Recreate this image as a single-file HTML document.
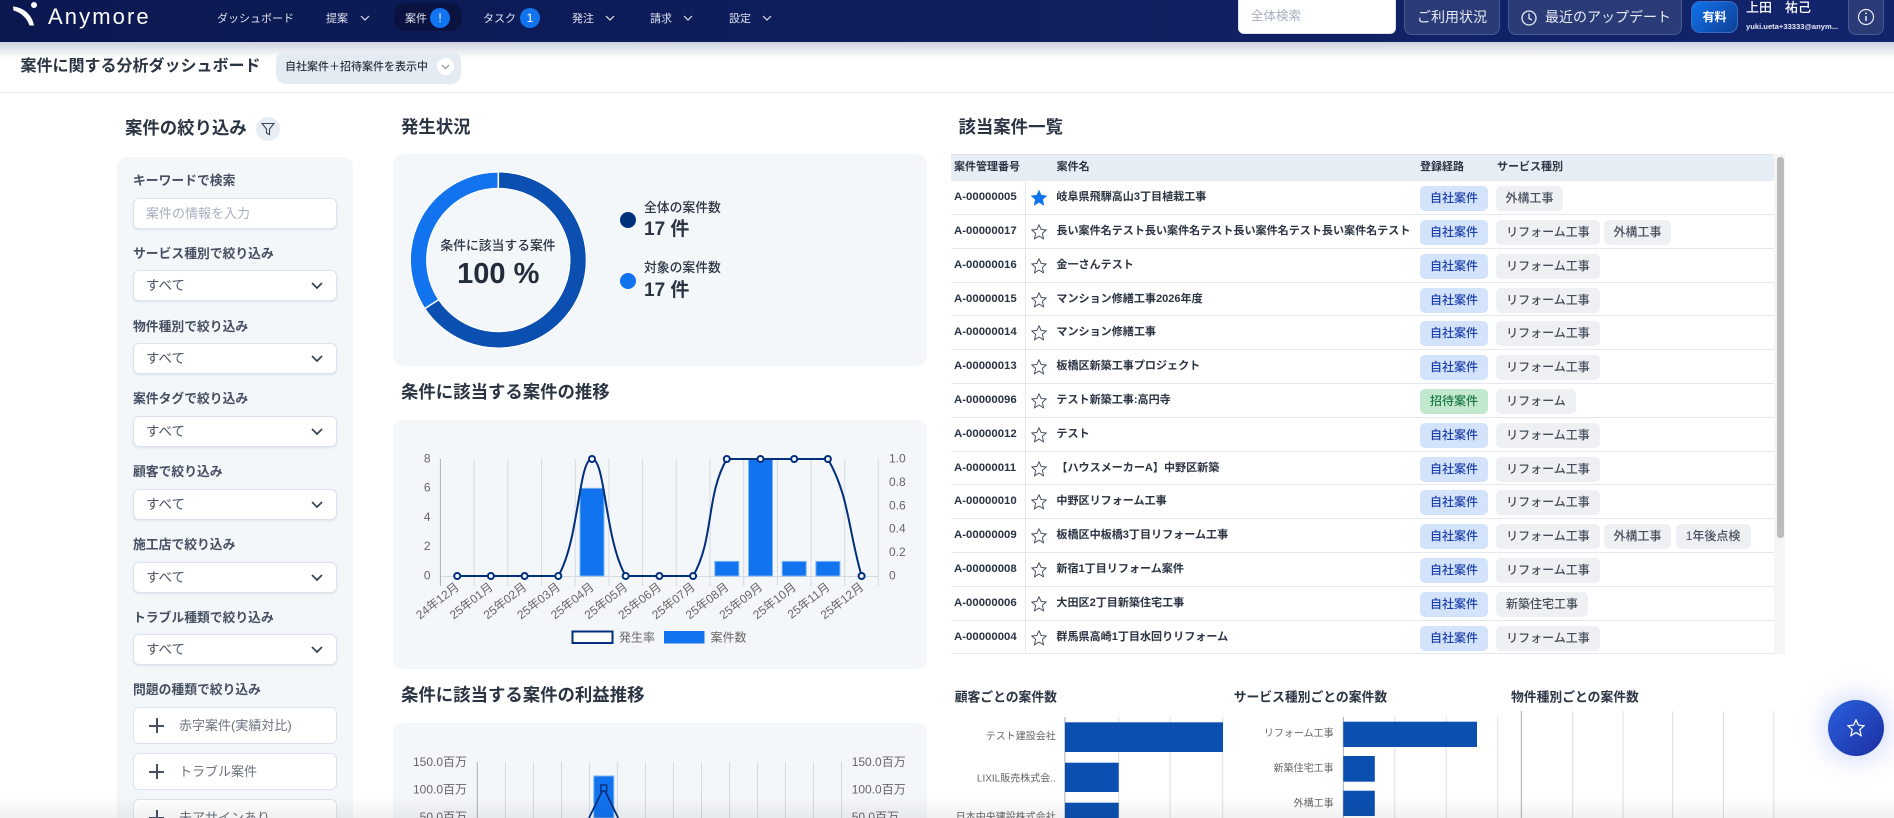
<!DOCTYPE html>
<html lang="ja"><head><meta charset="utf-8"><title>案件に関する分析ダッシュボード</title>
<style>
*{box-sizing:border-box}
html,body{margin:0;padding:0;width:1894px;height:818px;overflow:hidden;background:#fff;font-family:"Liberation Sans","Noto Sans CJK JP",sans-serif;color:#2b3443}
#root{position:absolute;left:0;top:0;width:1894px;height:818px;overflow:hidden;background:#fff}
.a{position:absolute;white-space:nowrap}
.t{position:absolute;white-space:nowrap;line-height:20px;height:20px}
#hd{position:absolute;left:0;top:0;width:1894px;height:42px;background:linear-gradient(90deg,#0b1850,#12246c)}
#sh{position:absolute;left:0;top:42px;width:1894px;height:16px;background:linear-gradient(#cdd2df,#fff)}
.nav{font-size:11px;color:#dfe3f0}
.hbtn{position:absolute;top:0;height:35px;background:#2b3b78;border:1px solid #4a5a92;border-top:0;border-radius:0 0 8px 8px;color:#e8ebf5;font-size:14px;line-height:34px;text-align:center}
.badge{position:absolute;top:8px;width:20px;height:20px;border-radius:50%;background:#1173ee;color:#fff;font-size:12px;line-height:20px;text-align:center}
.h2{font-size:17.4px;font-weight:700;color:#2b3443}
.lb{font-size:12.8px;font-weight:700;color:#465062}
.sel{position:absolute;left:133px;width:204px;height:31px;background:#fff;border:1px solid #dde3ee;border-radius:6px;box-shadow:0 1px 2px rgba(60,80,120,.12);font-size:13.5px;color:#4b5563;line-height:30px;padding-left:12px}
.sel svg{position:absolute;left:177px;top:11px}
.tb{position:absolute;left:133px;width:204px;height:37px;background:#fff;border:1px solid #dde3ee;border-radius:6px;font-size:13px;color:#6b7280;line-height:35px;padding-left:45px;white-space:nowrap}
.tb i{position:absolute;left:15px;top:17px;width:15px;height:2px;background:#465062}
.tb b{position:absolute;left:22px;top:10px;width:2px;height:15px;background:#465062}
.panel{position:absolute;background:#f4f7fa;border-radius:10px}
.row{position:absolute;left:951px;width:823px;border-bottom:1.5px solid #e2e8f0}
.row .id{position:absolute;left:3px;top:5.5px;font-size:11.4px;font-weight:700;line-height:20px;color:#2b3443;white-space:nowrap}
.row svg{position:absolute;left:80px;top:9px}
.row .nm{position:absolute;left:105.4px;top:5.5px;font-size:11.07px;font-weight:700;line-height:20px;color:#2b3443;white-space:nowrap}
.tag{position:absolute;top:4.5px;height:25px;border-radius:5px;font-size:12px;line-height:25px;text-align:center;white-space:nowrap}
.own{left:469px;width:68px;background:#d3e3fb;color:#1c3fa8;font-weight:500}
.inv{left:469px;width:68px;background:#c2e8ce;color:#187a40;font-weight:500}
.g{background:#eff0f3;color:#454e5c;font-weight:500}
.fab{position:absolute;left:1828px;top:700px;width:56px;height:56px;border-radius:50%;background:linear-gradient(135deg,#2a60e0,#1c2fa0);box-shadow:0 0 30px rgba(70,110,240,.35)}
#bot{position:absolute;left:0;top:796px;width:1894px;height:22px;background:linear-gradient(rgba(0,0,0,0),rgba(0,0,0,.055))}
</style></head><body><div id="root">

<div id="sh"></div>
<div id="hd"></div>

<svg class="a" style="left:0;top:0" width="170" height="42" viewBox="0 0 170 42">
<path d="M13 6.5C23 7.5 32 14 34 25.5L29.5 25.5C27 18 21 12.5 13.5 10.5Z" fill="#fff"/>
<circle cx="34" cy="5" r="3" fill="#fff"/>
</svg>
<div class="a" style="left:48px;top:4px;font-size:22px;line-height:26px;letter-spacing:2.1px;color:#fff">Anymore</div>

<div class="t nav" style="left:217px;top:8.5px">ダッシュボード</div>
<div class="t nav" style="left:326px;top:8.5px">提案</div>
<div class="a" style="left:394px;top:3px;width:68px;height:28px;background:#0a1340;border-radius:12px"></div>
<div class="t nav" style="left:405px;top:8.5px">案件</div>
<div class="badge" style="left:430px">!</div>
<div class="t nav" style="left:483px;top:8.5px">タスク</div>
<div class="badge" style="left:520px">1</div>
<div class="t nav" style="left:572px;top:8.5px">発注</div>
<div class="t nav" style="left:650px;top:8.5px">請求</div>
<div class="t nav" style="left:729px;top:8.5px">設定</div>
<svg class="a" style="left:0;top:0" width="800" height="42" fill="none" stroke="#dfe3f0" stroke-width="1.2">
<polyline points="361,16 365,20 369,16"/><polyline points="606,16 610,20 614,16"/><polyline points="684,16 688,20 692,16"/><polyline points="763,16 767,20 771,16"/>
</svg>

<div class="a" style="left:1238px;top:0;width:158px;height:34px;background:#fff;border:1px solid #dde3ee;border-top:0;border-radius:0 0 6px 6px;font-size:12.5px;color:#a7b0c0;line-height:32px;padding-left:12px">全体検索</div>
<div class="hbtn" style="left:1404px;width:96px">ご利用状況</div>
<div class="hbtn" style="left:1508px;width:174px;text-align:left;padding-left:36px">最近のアップデート</div>
<svg class="a" style="left:1520px;top:9px" width="18" height="18" fill="none" stroke="#e8ebf5" stroke-width="1.3"><circle cx="9" cy="9" r="7"/><polyline points="9,4.5 9,9.5 12,11"/></svg>
<div class="a" style="left:1691px;top:1px;width:47px;height:32px;border-radius:9px;border:1px solid #3a6bc0;background:linear-gradient(135deg,#1173ee,#0d3f94);color:#fff;font-size:12px;font-weight:700;text-align:center;line-height:30px">有料</div>
<div class="a" style="left:1746px;top:0;height:18px;overflow:hidden;line-height:16px;font-size:13px;font-weight:500;color:#fff">上田　祐己</div>
<div class="a" style="left:1746px;top:17px;line-height:20px;font-size:7.6px;font-weight:700;color:#e8ebf5">yuki.ueta+33333@anym...</div>
<div class="hbtn" style="left:1848px;width:36px"></div>
<svg class="a" style="left:1857px;top:8px" width="18" height="18" fill="none" stroke="#e8ebf5" stroke-width="1.2"><circle cx="9" cy="9" r="7.5"/><line x1="9" y1="8" x2="9" y2="13" stroke-width="1.5"/><circle cx="9" cy="5.3" r=".9" fill="#e8ebf5" stroke="none"/></svg>

<div class="t" style="left:20.5px;top:56.5px;font-size:16px;font-weight:700;color:#2b3443">案件に関する分析ダッシュボード</div>
<div class="a" style="left:276px;top:51px;width:185px;height:33px;background:#e4ebf3;border-radius:10px"></div>
<div class="t" style="left:285px;top:56.5px;font-size:11px;font-weight:500;color:#2b3443">自社案件＋招待案件を表示中</div>
<div class="a" style="left:437px;top:58px;width:17px;height:17px;background:#fff;border-radius:50%"></div>
<svg class="a" style="left:441px;top:64px" width="9" height="6" fill="none" stroke="#7b8494" stroke-width="1"><polyline points="1,1 4.5,4.5 8,1"/></svg>
<div class="a" style="left:0;top:92px;width:1894px;height:1px;background:#e8edf2"></div>

<div class="t h2" style="left:125px;top:118px">案件の絞り込み</div>
<div class="a" style="left:256px;top:117px;width:24px;height:24px;border-radius:50%;background:#e6edf5"></div>
<svg class="a" style="left:261px;top:122px" width="14" height="14" fill="none" stroke="#3a4354" stroke-width="1.1"><path d="M1 1.5H13L8.5 7V12.5L5.5 11V7Z"/></svg>
<div class="panel" style="left:117px;top:157px;width:236px;height:661px;border-radius:10px 10px 0 0"></div>
<div class="t lb" style="left:133px;top:170.5px">キーワードで検索</div>
<div class="sel" style="top:198px;font-size:13px;color:#a7b0c0">案件の情報を入力</div>
<div class="t lb" style="left:133px;top:243.5px">サービス種別で絞り込み</div>
<div class="sel" style="top:270px">すべて<svg width="12" height="8" fill="none" stroke="#3a4354" stroke-width="1.7"><polyline points="1,1 6,6 11,1"/></svg></div>
<div class="t lb" style="left:133px;top:316.5px">物件種別で絞り込み</div>
<div class="sel" style="top:343px">すべて<svg width="12" height="8" fill="none" stroke="#3a4354" stroke-width="1.7"><polyline points="1,1 6,6 11,1"/></svg></div>
<div class="t lb" style="left:133px;top:388.5px">案件タグで絞り込み</div>
<div class="sel" style="top:416px">すべて<svg width="12" height="8" fill="none" stroke="#3a4354" stroke-width="1.7"><polyline points="1,1 6,6 11,1"/></svg></div>
<div class="t lb" style="left:133px;top:461.5px">顧客で絞り込み</div>
<div class="sel" style="top:489px">すべて<svg width="12" height="8" fill="none" stroke="#3a4354" stroke-width="1.7"><polyline points="1,1 6,6 11,1"/></svg></div>
<div class="t lb" style="left:133px;top:534.5px">施工店で絞り込み</div>
<div class="sel" style="top:562px">すべて<svg width="12" height="8" fill="none" stroke="#3a4354" stroke-width="1.7"><polyline points="1,1 6,6 11,1"/></svg></div>
<div class="t lb" style="left:133px;top:607.5px">トラブル種類で絞り込み</div>
<div class="sel" style="top:634px">すべて<svg width="12" height="8" fill="none" stroke="#3a4354" stroke-width="1.7"><polyline points="1,1 6,6 11,1"/></svg></div>
<div class="t lb" style="left:133px;top:679.5px">問題の種類で絞り込み</div>
<div class="tb" style="top:707px"><i></i><b></b>赤字案件(実績対比)</div>
<div class="tb" style="top:753px"><i></i><b></b>トラブル案件</div>
<div class="tb" style="top:799px;height:19px;overflow:hidden;border-bottom:0;border-radius:6px 6px 0 0"><i></i><b></b>未アサインあり</div>

<div class="t h2" style="left:401px;top:117px">発生状況</div>
<div class="panel" style="left:393px;top:154px;width:534px;height:212px"></div>
<div class="t h2" style="left:401px;top:382px">条件に該当する案件の推移</div>
<div class="panel" style="left:393px;top:420px;width:534px;height:249px"></div>
<div class="t h2" style="left:401px;top:685px">条件に該当する案件の利益推移</div>
<div class="panel" style="left:393px;top:723px;width:534px;height:95px;border-radius:10px 10px 0 0"></div>

<svg class="a" style="left:0;top:0" width="1894" height="818" viewBox="0 0 1894 818" font-family="'Liberation Sans','Noto Sans CJK JP',sans-serif">
<!-- donut -->
<g fill="none" stroke-width="15.5">
<circle cx="498.3" cy="260" r="79.7" stroke="#1173ee"/>
<path d="M498.3 180.3A79.7 79.7 0 1 1 432.2 304.6" stroke="#0b50b0"/>
</g>
<g stroke="#fff" stroke-width="1.6"><line x1="498.3" y1="171" x2="498.3" y2="189"/><line x1="424" y1="309" x2="439" y2="299.5"/></g>
<circle cx="498.3" cy="260" r="71.7" fill="none" stroke="#fff" stroke-width="1"/>
<circle cx="498.3" cy="260" r="88" fill="none" stroke="#fff" stroke-width="1"/>
<text x="498" y="250" text-anchor="middle" font-size="12.8" font-weight="500" fill="#2b3443">条件に該当する案件</text>
<text x="498.3" y="283" text-anchor="middle" font-size="29" font-weight="700" fill="#232c3b">100 %</text>
<circle cx="628" cy="220" r="8" fill="#002f7c"/><circle cx="628" cy="281" r="8" fill="#1173ee"/>
<g fill="#2b3443"><text x="644" y="212" font-size="12.8" font-weight="500">全体の案件数</text>
<text x="644" y="235" font-size="19" font-weight="700">17 件</text>
<text x="644" y="272" font-size="12.8" font-weight="500">対象の案件数</text>
<text x="644" y="296" font-size="19" font-weight="700">17 件</text></g>

<!-- trend chart -->
<g stroke="#d5d9df" stroke-width="1">
<line x1="474.1" y1="459" x2="474.1" y2="586"/><line x1="507.8" y1="459" x2="507.8" y2="586"/><line x1="541.5" y1="459" x2="541.5" y2="586"/><line x1="575.2" y1="459" x2="575.2" y2="586"/><line x1="608.9" y1="459" x2="608.9" y2="586"/><line x1="642.6" y1="459" x2="642.6" y2="586"/><line x1="676.3" y1="459" x2="676.3" y2="586"/><line x1="710" y1="459" x2="710" y2="586"/><line x1="743.7" y1="459" x2="743.7" y2="586"/><line x1="777.4" y1="459" x2="777.4" y2="586"/><line x1="811.1" y1="459" x2="811.1" y2="586"/><line x1="844.8" y1="459" x2="844.8" y2="586"/><line x1="878.3" y1="459" x2="878.3" y2="586"/>
<line x1="440.4" y1="576.5" x2="878.3" y2="576.5"/>
</g>
<line x1="440.4" y1="459" x2="440.4" y2="586" stroke="#a9aeb6"/>
<g fill="#1173ee" stroke="#7ab5f5" stroke-width="1">
<rect x="580" y="488.3" width="24" height="87.7"/><rect x="714.8" y="561.4" width="24" height="14.6"/><rect x="748.5" y="459" width="24" height="117"/><rect x="782.2" y="561.4" width="24" height="14.6"/><rect x="815.9" y="561.4" width="24" height="14.6"/>
</g>
<path d="M457.2 576L558.3 576C579.4 539.3 578.5 459 592 459C605.5 459 604.6 539.3 625.7 576L693.1 576C714.2 539.3 705.7 495.7 726.8 459L827.9 459C849 495.7 848.1 529.2 861.6 576" fill="none" stroke="#002f7c" stroke-width="2"/>
<g fill="#f4f7fa" stroke="#002f7c" stroke-width="2">
<circle cx="457.2" cy="576" r="3"/><circle cx="490.9" cy="576" r="3"/><circle cx="524.6" cy="576" r="3"/><circle cx="558.3" cy="576" r="3"/><circle cx="592" cy="459" r="3"/><circle cx="625.7" cy="576" r="3"/><circle cx="659.4" cy="576" r="3"/><circle cx="693.1" cy="576" r="3"/><circle cx="726.8" cy="459" r="3"/><circle cx="760.5" cy="459" r="3"/><circle cx="794.2" cy="459" r="3"/><circle cx="827.9" cy="459" r="3"/><circle cx="861.6" cy="576" r="3"/>
</g>
<g font-size="12" fill="#666" text-anchor="end"><text x="430.5" y="462.5">8</text><text x="430.5" y="491.7">6</text><text x="430.5" y="521">4</text><text x="430.5" y="550.2">2</text><text x="430.5" y="579.5">0</text></g>
<g font-size="12" fill="#666"><text x="889" y="462.5">1.0</text><text x="889" y="485.9">0.8</text><text x="889" y="509.3">0.6</text><text x="889" y="532.7">0.4</text><text x="889" y="556.1">0.2</text><text x="889" y="579.5">0</text></g>
<g font-size="12" fill="#666" text-anchor="end">
<text transform="translate(460,588.5) rotate(-38)">24年12月</text>
<text transform="translate(493.7,588.5) rotate(-38)">25年01月</text>
<text transform="translate(527.4,588.5) rotate(-38)">25年02月</text>
<text transform="translate(561.1,588.5) rotate(-38)">25年03月</text>
<text transform="translate(594.8,588.5) rotate(-38)">25年04月</text>
<text transform="translate(628.5,588.5) rotate(-38)">25年05月</text>
<text transform="translate(662.2,588.5) rotate(-38)">25年06月</text>
<text transform="translate(695.9,588.5) rotate(-38)">25年07月</text>
<text transform="translate(729.6,588.5) rotate(-38)">25年08月</text>
<text transform="translate(763.3,588.5) rotate(-38)">25年09月</text>
<text transform="translate(797,588.5) rotate(-38)">25年10月</text>
<text transform="translate(830.7,588.5) rotate(-38)">25年11月</text>
<text transform="translate(864.4,588.5) rotate(-38)">25年12月</text>
</g>
<rect x="572.5" y="631.5" width="40" height="11.5" fill="#fff" stroke="#002f7c" stroke-width="2"/>
<rect x="664" y="631" width="40.5" height="12.5" fill="#1173ee"/>
<g font-size="12" fill="#666"><text x="619" y="641.5">発生率</text><text x="710.5" y="641.5">案件数</text></g>

<!-- profit chart -->
<g stroke="#d5d9df"><line x1="505.4" y1="762" x2="505.4" y2="818"/><line x1="533.4" y1="762" x2="533.4" y2="818"/><line x1="561.5" y1="762" x2="561.5" y2="818"/><line x1="589.6" y1="762" x2="589.6" y2="818"/><line x1="617.3" y1="762" x2="617.3" y2="818"/><line x1="645.4" y1="762" x2="645.4" y2="818"/><line x1="673.4" y1="762" x2="673.4" y2="818"/><line x1="701.5" y1="762" x2="701.5" y2="818"/><line x1="729.6" y1="762" x2="729.6" y2="818"/><line x1="757.6" y1="762" x2="757.6" y2="818"/><line x1="785.4" y1="762" x2="785.4" y2="818"/><line x1="813.4" y1="762" x2="813.4" y2="818"/><line x1="841.5" y1="762" x2="841.5" y2="818"/></g>
<line x1="477.3" y1="762" x2="477.3" y2="818" stroke="#a9aeb6"/>
<rect x="593.8" y="776" width="20" height="42" fill="#1173ee" stroke="#7ab5f5"/>
<path d="M589 818L603.7 788L618.2 818" fill="none" stroke="#002f7c" stroke-width="1.8"/>
<rect x="600.7" y="785" width="6" height="6" fill="#1173ee" stroke="#002f7c" stroke-width="1.4"/>
<g font-size="12" fill="#666" text-anchor="end"><text x="467" y="766">150.0百万</text><text x="467" y="793.5">100.0百万</text><text x="467" y="821">50.0百万</text></g>
<g font-size="12" fill="#666"><text x="851.7" y="766">150.0百万</text><text x="851.7" y="793.5">100.0百万</text><text x="851.7" y="821">50.0百万</text></g>

<!-- bottom charts -->
<g font-size="12.8" font-weight="700" fill="#2b3443"><text x="954.7" y="701.5">顧客ごとの案件数</text><text x="1233.7" y="701.5">サービス種別ごとの案件数</text><text x="1511" y="701.5">物件種別ごとの案件数</text></g>
<g stroke="#dcdfe4"><line x1="1118.7" y1="717" x2="1118.7" y2="818"/><line x1="1170" y1="717" x2="1170" y2="818"/><line x1="1222.8" y1="717" x2="1222.8" y2="818"/><line x1="1394.8" y1="717" x2="1394.8" y2="818"/><line x1="1446.2" y1="717" x2="1446.2" y2="818"/><line x1="1497.7" y1="717" x2="1497.7" y2="818"/>
<line x1="1572.7" y1="711" x2="1572.7" y2="818"/><line x1="1623" y1="711" x2="1623" y2="818"/><line x1="1672.6" y1="711" x2="1672.6" y2="818"/><line x1="1723.4" y1="711" x2="1723.4" y2="818"/><line x1="1773.7" y1="711" x2="1773.7" y2="818"/></g>
<g stroke="#a9aeb6"><line x1="1064.9" y1="717" x2="1064.9" y2="818"/><line x1="1343.3" y1="717" x2="1343.3" y2="818"/><line x1="1521.3" y1="711" x2="1521.3" y2="818"/></g>
<g fill="#0b50b0"><rect x="1065" y="722.3" width="158" height="29.7"/><rect x="1065" y="762.7" width="53.7" height="29.3"/><rect x="1065" y="802.7" width="53.7" height="15.3"/>
<rect x="1343.3" y="721.7" width="133.7" height="25.3"/><rect x="1343.3" y="756" width="31.5" height="25.7"/><rect x="1343.3" y="790.7" width="31.5" height="25.3"/></g>
<g font-size="10" fill="#666" text-anchor="end"><text x="1055.8" y="739.5">テスト建設会社</text><text x="1055.8" y="781.5">LIXIL販売株式会..</text><text x="1055.8" y="820">日本中央建設株式会社</text><text x="1333.6" y="736.5">リフォーム工事</text><text x="1333.6" y="771.5">新築住宅工事</text><text x="1333.6" y="806.5">外構工事</text></g>
</svg>

<!-- table -->
<div class="t h2" style="left:958.5px;top:117px">該当案件一覧</div>
<div class="a" style="left:951px;top:154px;width:823px;height:27px;background:#e6edf5;border-top:1px solid #dde4ec"></div>
<div class="t" style="left:954px;top:156.5px;font-size:11px;font-weight:700">案件管理番号</div>
<div class="t" style="left:1056.6px;top:156.5px;font-size:11px;font-weight:700">案件名</div>
<div class="t" style="left:1420px;top:156.5px;font-size:11px;font-weight:700">登録経路</div>
<div class="t" style="left:1497px;top:156.5px;font-size:11px;font-weight:700">サービス種別</div>
<div class="a" style="left:1774px;top:154px;width:11px;height:500px;background:#f5f5f5"></div>
<div class="a" style="left:1777px;top:157px;width:7px;height:381px;background:#bcbcbc;border-radius:3px"></div>
<div class="a" style="left:1025px;top:181px;width:1px;height:472px;background:#e2e8f0"></div>

<div class="row" style="top:181px;height:34px"><div class="id">A-00000005</div><svg width="16" height="16"><path d="M8 .8L10.1 5.4 15.2 6 11.4 9.3 12.5 14.8 8 12 3.5 14.8 4.6 9.3 .8 6 5.9 5.4Z" fill="#1173ee" stroke="#1173ee"/></svg><div class="nm">岐阜県飛騨高山3丁目植栽工事</div><div class="tag own">自社案件</div><div class="tag g" style="left:545px;width:67px">外構工事</div></div>
<div class="row" style="top:215px;height:34px"><div class="id">A-00000017</div><svg width="16" height="16" fill="none" stroke="#3a4354" stroke-width=".9"><path d="M8 .8L10.1 5.4 15.2 6 11.4 9.3 12.5 14.8 8 12 3.5 14.8 4.6 9.3 .8 6 5.9 5.4Z"/></svg><div class="nm">長い案件名テスト長い案件名テスト長い案件名テスト長い案件名テスト</div><div class="tag own">自社案件</div><div class="tag g" style="left:545px;width:104px">リフォーム工事</div><div class="tag g" style="left:653px;width:67px">外構工事</div></div>
<div class="row" style="top:249px;height:34px"><div class="id">A-00000016</div><svg width="16" height="16" fill="none" stroke="#3a4354" stroke-width=".9"><path d="M8 .8L10.1 5.4 15.2 6 11.4 9.3 12.5 14.8 8 12 3.5 14.8 4.6 9.3 .8 6 5.9 5.4Z"/></svg><div class="nm">金一さんテスト</div><div class="tag own">自社案件</div><div class="tag g" style="left:545px;width:104px">リフォーム工事</div></div>
<div class="row" style="top:283px;height:33px"><div class="id">A-00000015</div><svg width="16" height="16" fill="none" stroke="#3a4354" stroke-width=".9"><path d="M8 .8L10.1 5.4 15.2 6 11.4 9.3 12.5 14.8 8 12 3.5 14.8 4.6 9.3 .8 6 5.9 5.4Z"/></svg><div class="nm">マンション修繕工事2026年度</div><div class="tag own">自社案件</div><div class="tag g" style="left:545px;width:104px">リフォーム工事</div></div>
<div class="row" style="top:316px;height:34px"><div class="id">A-00000014</div><svg width="16" height="16" fill="none" stroke="#3a4354" stroke-width=".9"><path d="M8 .8L10.1 5.4 15.2 6 11.4 9.3 12.5 14.8 8 12 3.5 14.8 4.6 9.3 .8 6 5.9 5.4Z"/></svg><div class="nm">マンション修繕工事</div><div class="tag own">自社案件</div><div class="tag g" style="left:545px;width:104px">リフォーム工事</div></div>
<div class="row" style="top:350px;height:34px"><div class="id">A-00000013</div><svg width="16" height="16" fill="none" stroke="#3a4354" stroke-width=".9"><path d="M8 .8L10.1 5.4 15.2 6 11.4 9.3 12.5 14.8 8 12 3.5 14.8 4.6 9.3 .8 6 5.9 5.4Z"/></svg><div class="nm">板橋区新築工事プロジェクト</div><div class="tag own">自社案件</div><div class="tag g" style="left:545px;width:104px">リフォーム工事</div></div>
<div class="row" style="top:384px;height:34px"><div class="id">A-00000096</div><svg width="16" height="16" fill="none" stroke="#3a4354" stroke-width=".9"><path d="M8 .8L10.1 5.4 15.2 6 11.4 9.3 12.5 14.8 8 12 3.5 14.8 4.6 9.3 .8 6 5.9 5.4Z"/></svg><div class="nm">テスト新築工事:高円寺</div><div class="tag inv">招待案件</div><div class="tag g" style="left:545px;width:80px">リフォーム</div></div>
<div class="row" style="top:418px;height:34px"><div class="id">A-00000012</div><svg width="16" height="16" fill="none" stroke="#3a4354" stroke-width=".9"><path d="M8 .8L10.1 5.4 15.2 6 11.4 9.3 12.5 14.8 8 12 3.5 14.8 4.6 9.3 .8 6 5.9 5.4Z"/></svg><div class="nm">テスト</div><div class="tag own">自社案件</div><div class="tag g" style="left:545px;width:104px">リフォーム工事</div></div>
<div class="row" style="top:452px;height:33px"><div class="id">A-00000011</div><svg width="16" height="16" fill="none" stroke="#3a4354" stroke-width=".9"><path d="M8 .8L10.1 5.4 15.2 6 11.4 9.3 12.5 14.8 8 12 3.5 14.8 4.6 9.3 .8 6 5.9 5.4Z"/></svg><div class="nm">【ハウスメーカーA】中野区新築</div><div class="tag own">自社案件</div><div class="tag g" style="left:545px;width:104px">リフォーム工事</div></div>
<div class="row" style="top:485px;height:34px"><div class="id">A-00000010</div><svg width="16" height="16" fill="none" stroke="#3a4354" stroke-width=".9"><path d="M8 .8L10.1 5.4 15.2 6 11.4 9.3 12.5 14.8 8 12 3.5 14.8 4.6 9.3 .8 6 5.9 5.4Z"/></svg><div class="nm">中野区リフォーム工事</div><div class="tag own">自社案件</div><div class="tag g" style="left:545px;width:104px">リフォーム工事</div></div>
<div class="row" style="top:519px;height:34px"><div class="id">A-00000009</div><svg width="16" height="16" fill="none" stroke="#3a4354" stroke-width=".9"><path d="M8 .8L10.1 5.4 15.2 6 11.4 9.3 12.5 14.8 8 12 3.5 14.8 4.6 9.3 .8 6 5.9 5.4Z"/></svg><div class="nm">板橋区中板橋3丁目リフォーム工事</div><div class="tag own">自社案件</div><div class="tag g" style="left:545px;width:104px">リフォーム工事</div><div class="tag g" style="left:653px;width:67px">外構工事</div><div class="tag g" style="left:724.6px;width:75px">1年後点検</div></div>
<div class="row" style="top:553px;height:34px"><div class="id">A-00000008</div><svg width="16" height="16" fill="none" stroke="#3a4354" stroke-width=".9"><path d="M8 .8L10.1 5.4 15.2 6 11.4 9.3 12.5 14.8 8 12 3.5 14.8 4.6 9.3 .8 6 5.9 5.4Z"/></svg><div class="nm">新宿1丁目リフォーム案件</div><div class="tag own">自社案件</div><div class="tag g" style="left:545px;width:104px">リフォーム工事</div></div>
<div class="row" style="top:587px;height:34px"><div class="id">A-00000006</div><svg width="16" height="16" fill="none" stroke="#3a4354" stroke-width=".9"><path d="M8 .8L10.1 5.4 15.2 6 11.4 9.3 12.5 14.8 8 12 3.5 14.8 4.6 9.3 .8 6 5.9 5.4Z"/></svg><div class="nm">大田区2丁目新築住宅工事</div><div class="tag own">自社案件</div><div class="tag g" style="left:545px;width:92px">新築住宅工事</div></div>
<div class="row" style="top:621px;height:33px"><div class="id">A-00000004</div><svg width="16" height="16" fill="none" stroke="#3a4354" stroke-width=".9"><path d="M8 .8L10.1 5.4 15.2 6 11.4 9.3 12.5 14.8 8 12 3.5 14.8 4.6 9.3 .8 6 5.9 5.4Z"/></svg><div class="nm">群馬県高崎1丁目水回りリフォーム</div><div class="tag own">自社案件</div><div class="tag g" style="left:545px;width:104px">リフォーム工事</div></div>

<div id="bot"></div>
<div class="fab"><svg style="position:absolute;left:19px;top:19px" width="18" height="18" viewBox="0 0 16 16" fill="none" stroke="#fff" stroke-width="1.1"><path d="M8 .8L10.1 5.4 15.2 6 11.4 9.3 12.5 14.8 8 12 3.5 14.8 4.6 9.3 .8 6 5.9 5.4Z"/></svg></div>
</div></body></html>
